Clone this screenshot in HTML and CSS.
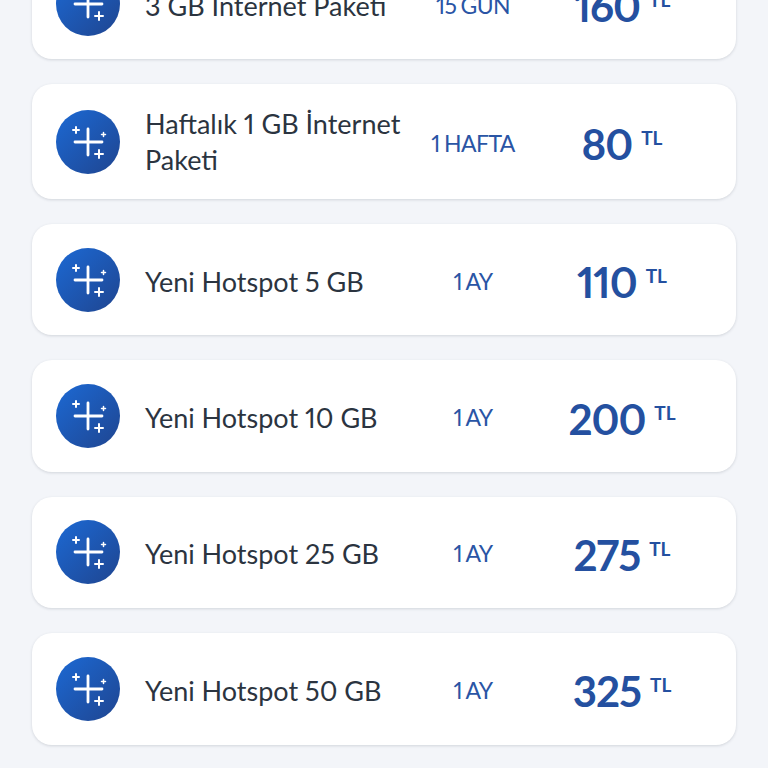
FILE: index.html
```html
<!DOCTYPE html>
<html lang="tr">
<head>
    <meta charset="utf-8">
    <meta name="viewport" content="width=device-width, initial-scale=1.0">
    <title>Paketler</title>
    <link rel="stylesheet" href="styles.css">
</head>
<body>
    <svg class="sprite" width="0" height="0">
        <defs>
            <linearGradient id="icon-bg" x1="0" y1="0" x2="1" y2="1">
                <stop offset="0" stop-color="#1c69d4"/>
                <stop offset="1" stop-color="#1f4590"/>
            </linearGradient>
            <symbol id="sparkle" viewBox="0 0 64 64">
                <circle cx="32" cy="32" r="32" fill="url(#icon-bg)"/>
                <path d="M32 19V45M19 32H46" stroke="#fff" stroke-width="2.8" stroke-linecap="round" fill="none"/>
                <path d="M20 17V23M17 20H23M43 40V48M39 44H47" stroke="#fff" stroke-width="2" stroke-linecap="round" fill="none"/>
                <path d="M47.500 22.500V26.500M45.500 24.500H49.500" stroke="#fff" stroke-width="1.500" stroke-linecap="round" fill="none"/>
            </symbol>
        </defs>
    </svg>

    <div class="package-list">
        <div class="package">
            <svg class="package-icon"><use href="#sparkle"/></svg>
            <div class="package-name">3 GB İnternet Paketi</div>
            <div class="package-period">15 GÜN</div>
            <div class="package-price">160<span class="currency">TL</span></div>
        </div>
        <div class="package package-tall">
            <svg class="package-icon"><use href="#sparkle"/></svg>
            <div class="package-name">Haftalık 1 GB İnternet Paketi</div>
            <div class="package-period">1 HAFTA</div>
            <div class="package-price">80<span class="currency">TL</span></div>
        </div>
        <div class="package">
            <svg class="package-icon"><use href="#sparkle"/></svg>
            <div class="package-name">Yeni Hotspot 5 GB</div>
            <div class="package-period">1 AY</div>
            <div class="package-price">110<span class="currency">TL</span></div>
        </div>
        <div class="package">
            <svg class="package-icon"><use href="#sparkle"/></svg>
            <div class="package-name">Yeni Hotspot 10 GB</div>
            <div class="package-period">1 AY</div>
            <div class="package-price">200<span class="currency">TL</span></div>
        </div>
        <div class="package">
            <svg class="package-icon"><use href="#sparkle"/></svg>
            <div class="package-name">Yeni Hotspot 25 GB</div>
            <div class="package-period">1 AY</div>
            <div class="package-price">275<span class="currency">TL</span></div>
        </div>
        <div class="package">
            <svg class="package-icon"><use href="#sparkle"/></svg>
            <div class="package-name">Yeni Hotspot 50 GB</div>
            <div class="package-period">1 AY</div>
            <div class="package-price">325<span class="currency">TL</span></div>
        </div>
    </div>
</body>
</html>
```

FILE: styles.css
```css
html,
body {
    height: 100%;
}

body {
    margin: 0;
    overflow: hidden;
    background: #f3f5f9;
    font-family: "Lato", "Noto Sans", sans-serif;
    font-variant-numeric: proportional-nums;
    color: #2b3440;
}

.sprite {
    display: block;
    height: 0;
}

/* the list is scrolled, so the first card is cut by the top edge */
.package-list {
    display: flex;
    flex-direction: column;
    gap: 25px;
    margin-top: -52px;
    padding: 0 32px;
}

.package {
    display: grid;
    grid-template-columns: 64px 1fr 120px 178px;
    align-items: center;
    height: 111.4px;
    padding-left: 24px;
    padding-right: 25px;
    background: #fff;
    border-radius: 20px;
    box-shadow: 0 1px 3px rgba(40, 50, 70, 0.16);
    box-sizing: border-box;
}

.package-tall {
    height: 114.6px;
}

.package-icon {
    width: 64px;
    height: 64px;
}

.package-name {
    margin-top: 4px;
    margin-left: 25px;
    font-size: 27px;
    line-height: 36px;
}

.package-tall .package-name {
    margin-top: 0;
}

.package-period {
    margin-top: 2px;
    text-align: center;
    font-size: 23px;
    letter-spacing: -0.6px;
    word-spacing: -1px;
    color: #2a55a5;
}

.package-price {
    display: flex;
    justify-content: center;
    align-items: flex-start;
    margin-top: 5px;
    font-size: 42px;
    font-weight: 700;
    letter-spacing: -1px;
    line-height: 48px;
    color: #2450a0;
}

.currency {
    margin-left: 9px;
    margin-top: 6px;
    font-size: 19px;
    letter-spacing: 0;
    line-height: 24px;
}
```
